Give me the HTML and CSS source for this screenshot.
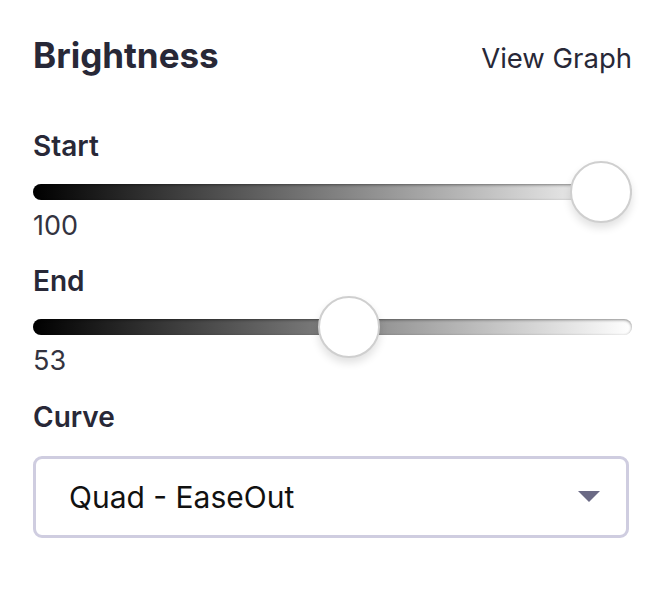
FILE: index.html
```html
<!DOCTYPE html>
<html>
<head>
<meta charset="utf-8">
<link rel="stylesheet" href="styles.css">
</head>
<body>
<div class="panel">
  <div class="header">
    <h1 class="title">Brightness</h1>
    <a class="link">View Graph</a>
  </div>
  <div class="field">
    <div class="label">Start</div>
    <div class="slider">
      <div class="track"></div>
      <div class="thumb" style="left: calc((100% - 62px) * 1)"></div>
    </div>
    <div class="value">100</div>
  </div>
  <div class="field">
    <div class="label label-end">End</div>
    <div class="slider">
      <div class="track"></div>
      <div class="thumb" style="left: calc((100% - 62px) * 0.53)"></div>
    </div>
    <div class="value">53</div>
  </div>
  <div class="field">
    <div class="label label-curve">Curve</div>
    <div class="select">
      <span class="select-text">Quad - EaseOut</span>
      <svg class="arrow" width="22" height="12" viewBox="0 0 22 12"><polygon points="0,0 22,0 11,11" fill="#6b6a85"/></svg>
    </div>
  </div>
</div>
</body>
</html>
```
FILE: styles.css
```css
html, body {
  margin: 0;
  padding: 0;
  background: #ffffff;
}
* {
  box-sizing: border-box;
}
body {
  font-family: Inter, "Noto Sans", sans-serif;
  color: #282837;
}
.panel {
  padding: 38px 36px 0 33px;
  display: flex;
  flex-direction: column;
}
.header {
  display: flex;
  justify-content: space-between;
  align-items: baseline;
}
.title {
  margin: 0;
  font-size: 35px;
  font-weight: 700;
  line-height: 35px;
}
.link {
  font-size: 27.5px;
  font-weight: 400;
  line-height: 35px;
  color: #282837;
}
.field {
  display: flex;
  flex-direction: column;
}
.label {
  font-size: 28px;
  font-weight: 600;
  line-height: 28px;
  margin-top: 56px;
}
.label-end {
  margin-top: 28px;
}
.label-curve {
  margin-top: 29px;
}
.slider {
  position: relative;
  height: 16px;
  margin-top: 24px;
}
.track {
  width: 100%;
  height: 16px;
  border-radius: 8px;
  background: linear-gradient(to right, #000000 0%, #ffffff 100%);
  box-shadow: inset 0 1px 3px rgba(0, 0, 0, 0.45);
}
.thumb {
  position: absolute;
  top: -23px;
  width: 62px;
  height: 62px;
  border-radius: 50%;
  background: #ffffff;
  border: 2px solid #cfcfcf;
  box-shadow: 0 5px 9px rgba(0, 0, 0, 0.12);
}
.value {
  font-size: 27px;
  font-weight: 400;
  line-height: 27px;
  color: #333340;
  margin-top: 12px;
}
.select {
  margin-top: 25px;
  height: 82px;
  width: 596px;
  border: 3px solid #cfcde0;
  border-radius: 9px;
  display: flex;
  align-items: center;
  justify-content: space-between;
  padding: 0 26px 0 33px;
}
.select-text {
  font-size: 30px;
  color: #111111;
}
```
